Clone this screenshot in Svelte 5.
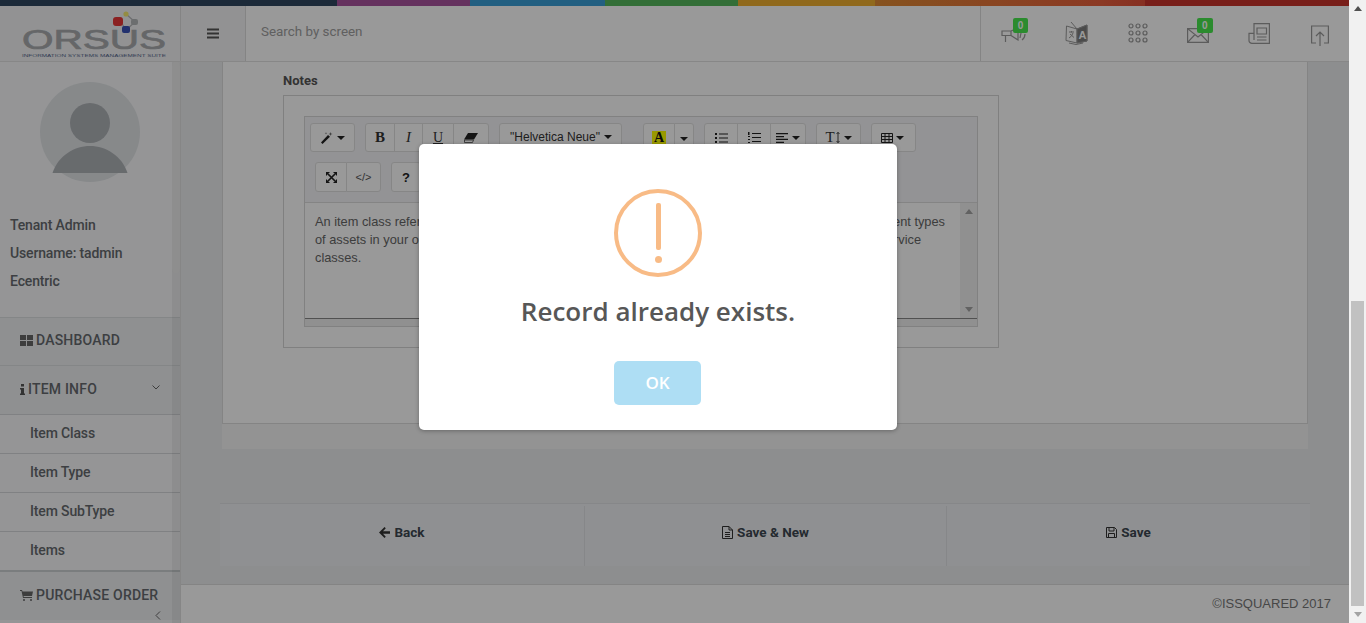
<script>
	const menuItems = ['Item Class', 'Item Type', 'Item SubType', 'Items'];
</script>

<div class="page">
	<div class="stripe"></div>

	<header class="topbar">
		<div class="logo">
			<svg width="180" height="55" viewBox="0 0 180 55">
				<path d="M126 8 L135 16 L126 24 L121 16" fill="none" stroke="#b5b7b9" stroke-width="1.2" />
				<rect x="113" y="11" width="10" height="9" rx="3" fill="#e83838" />
				<circle cx="126" cy="8" r="2.6" fill="#f5ea70" />
				<rect x="131" y="13" width="7" height="6" rx="2" fill="#b5b7b9" />
				<rect x="122" y="20" width="8" height="7" rx="2" fill="#3a52b8" />
				<text x="22" y="43" textLength="144" lengthAdjust="spacingAndGlyphs" class="logo-word">ORSUS</text>
				<text x="22" y="50.500" textLength="144" lengthAdjust="spacingAndGlyphs" class="logo-tag">INFORMATION SYSTEMS MANAGEMENT SUITE</text>
			</svg>
		</div>
		<div class="burger">
			<svg width="12" height="11" viewBox="0 0 12 11"><path d="M0 .5h12v2H0zM0 4.500h12v2H0zM0 8.500h12v2H0z" fill="#555" /></svg>
		</div>
		<div class="search">Search by screen</div>
		<div class="tools">
			<div class="tool">
				<svg class="low" width="27" height="14" viewBox="0 0 27 14" fill="none" stroke="#999" stroke-width="1.2">
					<path d="M1 3h9v4.500H1zM4.500 7.500V14M10 3l7-3v12l-7-4.500M20 5l-1 5M24 6q0 4-3 6" />
				</svg>
				<span class="badge">0</span>
			</div>
			<div class="tool">
				<svg class="nudge" width="23" height="25" viewBox="0 0 23 25" fill="none" stroke="#999" stroke-width="1">
					<path d="M1.500 5L12 8v14L1 19.500zM12 8l10-4v16l-10 2" />
					<path d="M12 8l10-4v16l-10 2zM6 1l6 7" fill="#7d7d7d" />
					<path d="M4 11h5M6.500 10v1.500M8 12q-1 3.500-4 5M5 13l4 3.500M4 22q7 3 14 0" />
					<text x="13.500" y="18" class="tr-a">A</text>
				</svg>
			</div>
			<div class="tool">
				<svg class="nudge" width="20" height="20" viewBox="0 0 20 20" fill="none" stroke="#999" stroke-width="1.2">
					<circle cx="3" cy="3" r="2" /><circle cx="10" cy="3" r="2" /><circle cx="17" cy="3" r="2" />
					<circle cx="3" cy="10" r="2" /><circle cx="10" cy="10" r="2" /><circle cx="17" cy="10" r="2" />
					<circle cx="3" cy="17" r="2" /><circle cx="10" cy="17" r="2" /><circle cx="17" cy="17" r="2" />
				</svg>
			</div>
			<div class="tool">
				<svg class="low" width="22" height="15" viewBox="0 0 22 15" fill="none" stroke="#999" stroke-width="1.2">
					<path d="M.6.6h20.800v13.800H.6zM.6.6L11 9 21.400.6M.6 14.400L8 6.500M21.400 14.400L14 6.500" />
				</svg>
				<span class="badge mail">0</span>
			</div>
			<div class="tool">
				<svg width="22" height="21" viewBox="0 0 22 21" fill="none" stroke="#999" stroke-width="1.2">
					<path d="M6 17V.6h15.400v19.800H4a3 3 0 0 1-3-3v-7h5" />
					<path d="M9 5h9.500v6H9zM9 14h9.500M9 17h9.500" />
				</svg>
			</div>
			<div class="tool">
				<svg class="low" width="18" height="21" viewBox="0 0 18 21" fill="none" stroke="#999" stroke-width="1.2">
					<path d="M5 18H.6V1h16.800v17H13M9 21V7M5 11l4-4 4 4" />
				</svg>
			</div>
		</div>
	</header>

	<div class="body">
		<aside class="sidebar">
			<div class="side-scroll"><div class="side-thumb"></div></div>
			<div class="profile">
				<svg class="avatar" width="100" height="100" viewBox="0 0 100 100">
					<circle cx="50" cy="50" r="50" fill="#e1e4e7" />
					<circle cx="50" cy="41" r="20" fill="#aeb2b6" />
					<path d="M12.500 91 C18 74 34 64 50 64 C66 64 82 74 87.500 91 z" fill="#aeb2b6" />
				</svg>
				<p>Tenant Admin</p>
				<p>Username: tadmin</p>
				<p>Ecentric</p>
			</div>
			<nav>
				<div class="nav-head dash">
					<svg width="13" height="11" viewBox="0 0 13 11" fill="#666"><path d="M0 0h6v5H0zM7 0h6v5H7zM0 6h6v5H0zM7 6h6v5H7z" /></svg>
					DASHBOARD
				</div>
				<div class="nav-head info">
					<svg width="5" height="11" viewBox="0 0 5 11" fill="#555"><path d="M1 0h3v2.500H1zM0 4h4v5.500h1V11H0V9.500h1V5.500H0z" /></svg>
					ITEM INFO
					<svg class="chev" width="8" height="5" viewBox="0 0 8 5" fill="none" stroke="#666" stroke-width="1"><path d="M.5.5L4 4 7.500.5" /></svg>
				</div>
				{#each menuItems as item}
					<div class="sub">{item}</div>
				{/each}
				<div class="nav-head purchase">
					<svg width="13" height="11" viewBox="0 0 13 11" fill="#666"><path d="M0 0h2l.5 1.500H13L12 6H3.500l.3 1H12v1H3L1.500 1H0z" /><circle cx="4" cy="10" r="1" /><circle cx="11" cy="10" r="1" /></svg>
					PURCHASE ORDER
				</div>
				<svg class="collapse" width="6" height="9" viewBox="0 0 6 9" fill="none" stroke="#666" stroke-width="1"><path d="M5 .5L1 4.500 5 8.500" /></svg>
			</nav>
		</aside>

		<main class="content">
			<section class="card">
				<div class="label">Notes</div>
				<div class="editor-box">
					<div class="editor">
						<div class="toolbar">
							<div class="tb-row">
								<div class="group">
									<span class="btn w45">
										<svg width="12" height="12" viewBox="0 0 12 12"><path d="M0 10.500L7 3l2 1.800L1.500 12z" fill="#222" /><path d="M9.500 0l.5 1.500 1.500.5-1.500.5-.5 1.500L9 2.500 7.500 2 9 1.500zM5 0l.3 1 1 .3-1 .3-.3 1-.3-1-1-.3 1-.3z" fill="#666" /></svg>
										<i class="caret"></i>
									</span>
								</div>
								<div class="group">
									<span class="btn glyph b w30">B</span>
									<span class="btn glyph it w28">I</span>
									<span class="btn glyph un w31">U</span>
									<span class="btn w35">
										<svg width="14" height="10" viewBox="0 0 14 10"><path d="M4 0h10l-4 6.500H0z" fill="#222" /><path d="M.5 7h9L8.500 9.500H.5z" fill="none" stroke="#444" stroke-width=".8" /></svg>
									</span>
								</div>
								<div class="group">
									<span class="btn font w123">"Helvetica Neue" <i class="caret"></i></span>
								</div>
								<div class="group gap-lg">
									<span class="btn w32"><span class="color-a">A</span></span>
									<span class="btn w19"><i class="caret solo"></i></span>
								</div>
								<div class="group">
									<span class="btn w33">
										<svg width="13" height="10" viewBox="0 0 13 10" fill="#222"><path d="M0 0h2v2H0zM0 4h2v2H0zM0 8h2v2H0zM4 .5h9v1H4zM4 4.500h9v1H4zM4 8.500h9v1H4z" /></svg>
									</span>
									<span class="btn w33">
										<svg width="13" height="11" viewBox="0 0 13 11" fill="#222"><path d="M0 0h1.500v3H0zM0 4h2v1H0zM0 7h2v1H0zM0 10h2v1H0zM4 1h9v1H4zM4 5h9v1H4zM4 9h9v1H4z" /></svg>
									</span>
									<span class="btn w35">
										<svg width="12" height="10" viewBox="0 0 12 10" fill="#222"><path d="M0 0h12v1.300H0zM0 2.900h8v1.300H0zM0 5.800h12v1.300H0zM0 8.700h8V10H0z" /></svg>
										<i class="caret"></i>
									</span>
								</div>
								<div class="group">
									<span class="btn w45">
										<span class="tt">T</span><svg width="4" height="11" viewBox="0 0 4 11" fill="none" stroke="#444"><path d="M2 0v11M.5 2L2 .5 3.500 2M.5 9L2 10.500 3.500 9" /></svg>
										<i class="caret"></i>
									</span>
								</div>
								<div class="group">
									<span class="btn w45 tight">
										<svg width="12" height="10" viewBox="0 0 12 10" fill="none" stroke="#222"><path d="M.5.5h11v9H.5zM.5 3.500h11M.5 6.500h11M4 .5v9M8 .5v9" /></svg>
										<i class="caret"></i>
									</span>
								</div>
							</div>
							<div class="tb-row second">
								<div class="group">
									<span class="btn w32">
										<svg width="11" height="11" viewBox="0 0 11 11"><path d="M0 0h4L0 4zM11 0v4L7 0zM0 11V7l4 4zM11 11H7l4-4z" fill="#222" /><path d="M2 2l7 7M9 2l-7 7" stroke="#222" stroke-width="1.700" /></svg>
									</span>
									<span class="btn code w34">&lt;/&gt;</span>
								</div>
								<div class="group">
									<span class="btn help w30">?</span>
								</div>
							</div>
						</div>
						<div class="edit-area">
							<div class="edit-text">
								<div class="line"><span>An item class refers to a group</span><span>to represent different types</span></div>
								<div class="line short"><span>of assets in your organization</span><span>as product or service</span></div>
								<div class="line"><span>classes.</span></div>
							</div>
							<div class="edit-scroll">
								<i class="arrow up"></i>
								<i class="arrow down"></i>
							</div>
						</div>
						<div class="statusbar"></div>
					</div>
				</div>
			</section>
			<div class="card-foot"></div>

			<div class="actions">
				<div class="action">
					<svg width="11" height="11" viewBox="0 0 11 11" fill="#333"><path d="M5.500 0l1.300 1.300L4 4.200h7v2.600H4l2.800 2.900L5.500 11 0 5.500z" /></svg>
					Back
				</div>
				<div class="action">
					<svg width="11" height="13" viewBox="0 0 11 13" fill="none" stroke="#333"><path d="M.5.500h6.500l3.500 3.500v8.500H.5zM7 .5V4h3.500M3 6.500h5M3 8.500h5M3 10.500h5" /></svg>
					Save &amp; New
				</div>
				<div class="action">
					<svg width="11" height="11" viewBox="0 0 11 11" fill="none" stroke="#333"><path d="M.5.500h8l2 2v8H.5zM3 .5v3.500h5V.5M2.500 10.500V6.500h6v4" /></svg>
					Save
				</div>
			</div>

			<footer class="foot">©ISSQUARED 2017</footer>
		</main>
	</div>

	<div class="overlay">
		<div class="modal">
			<div class="warn">
				<span class="warn-bar"></span>
				<span class="warn-dot"></span>
			</div>
			<h2>Record already exists.</h2>
			<button class="ok">OK</button>
		</div>
	</div>

	<div class="page-scroll">
		<i class="arrow up top"></i>
		<div class="page-thumb"></div>
		<i class="arrow down bottom"></i>
	</div>
</div>

<style>
	:global(body) {
		margin: 0;
		overflow: hidden;
	}

	.page {
		position: relative;
		width: 1366px;
		height: 623px;
		display: flex;
		flex-direction: column;
		overflow: hidden;
		padding-right: 17px;
		box-sizing: border-box;
		background: #ebedef;
		font-family: Roboto, "Liberation Sans", sans-serif;
		color: #333;
	}

	.stripe {
		height: 6px;
		flex: none;
		background: linear-gradient(to right,
			#2f4660 0, #2f4660 337px,
			#a8549f 337px, #a8549f 470px,
			#3a9fd8 470px, #3a9fd8 605px,
			#56b85c 605px, #56b85c 738px,
			#f0b030 738px, #f0b030 875px,
			#e08a34 875px, #e8603c 1100px, #e0503a 1145px,
			#c8352c 1145px, #c8352c 100%);
	}

	.topbar {
		height: 56px;
		flex: none;
		display: flex;
		background: #fff;
		border-bottom: 1px solid #e2e2e2;
		box-sizing: border-box;
	}

	.logo {
		width: 181px;
		flex: none;
		height: 55px;
		border-right: 1px solid #dcdcdc;
		box-sizing: border-box;
		background: #f3f4f5;
	}

	.logo-word {
		font: 400 27px "Liberation Sans", sans-serif;
		fill: #a9abae;
		stroke: #a9abae;
		stroke-width: 0.7;
	}

	.logo-tag {
		font: 400 3.500px "Liberation Sans", sans-serif;
		fill: #5a6a90;
	}

	.burger {
		width: 64px;
		flex: none;
		display: flex;
		align-items: center;
		justify-content: center;
		border-right: 1px solid #dcdcdc;
		background: #f3f4f5;
	}

	.search {
		flex: 1;
		padding: 0 15px;
		line-height: 52px;
		font-size: 13.400px;
		color: #a0a0a0;
	}

	.tools {
		width: 369px;
		flex: none;
		display: flex;
		gap: 31.300px;
		border-left: 1px solid #dcdcdc;
		box-sizing: border-box;
		padding: 12px 0 0 18px;
	}

	.tool {
		position: relative;
		display: flex;
		width: 30px;
		height: 30px;
		justify-content: center;
		align-items: center;
	}

	.tool .low {
		margin-top: 4px;
	}

	.tool .nudge {
		margin-left: 3px;
	}

	.badge {
		position: absolute;
		left: 14px;
		top: 0;
		width: 15px;
		height: 15px;
		border-radius: 2px;
		background: #48e84e;
		color: #fff;
		font: 700 10px/15px "Liberation Sans", sans-serif;
		text-align: center;
	}

	.badge.mail {
		left: 14px;
		width: 16px;
	}

	.tr-a {
		font: 700 11px "Liberation Sans", sans-serif;
		fill: #fff;
		stroke: none;
	}

	.body {
		flex: 1;
		display: flex;
		min-height: 0;
	}

	.sidebar {
		position: relative;
		width: 181px;
		flex: none;
		background: #f8f9fa;
		border-right: 1px solid #e0e0e0;
		box-sizing: border-box;
		overflow: hidden;
		font-weight: 500;
		font-size: 14px;
		color: #666a6e;
	}

	.side-scroll {
		position: absolute;
		z-index: 1;
		right: 0;
		top: 0;
		bottom: 0;
		width: 8px;
		background: rgba(0, 0, 0, 0.05);
	}

	.side-thumb {
		height: 211px;
		border-radius: 4px;
		background: #8e8e8e;
	}

	.profile {
		height: 255px;
		box-sizing: border-box;
		padding: 20px 0 0 10px;
	}

	.avatar {
		display: block;
		margin: 0 0 34px 30px;
	}

	.profile p {
		margin: 0 0 10px;
		line-height: 18px;
		white-space: nowrap;
		letter-spacing: -0.15px;
	}

	.nav-head {
		display: flex;
		align-items: center;
		gap: 3px;
		padding-left: 20px;
		box-sizing: border-box;
		white-space: nowrap;
		letter-spacing: 0.2px;
		background: #eef0f2;
		border-top: 1px solid #dcdfe2;
	}

	.dash {
		height: 48px;
		padding-bottom: 3px;
	}

	.info {
		height: 49px;
		padding-bottom: 2px;
		position: relative;
	}

	.chev {
		position: absolute;
		left: 152px;
		top: 19px;
	}

	.sub {
		height: 39px;
		line-height: 37px;
		padding-left: 30px;
		box-sizing: border-box;
		letter-spacing: -0.15px;
		border-top: 1px solid #d5d8db;
	}

	.purchase {
		height: 50px;
		padding-bottom: 2px;
		border-top: 2px solid #ccd0d3;
	}

	nav {
		position: relative;
	}

	.collapse {
		position: absolute;
		left: 155px;
		bottom: 0;
	}

	.content {
		flex: 1;
		min-width: 0;
		display: flex;
		flex-direction: column;
	}

	.card {
		height: 362px;
		flex: none;
		box-sizing: border-box;
		margin: 0 41px;
		padding: 11px 0 0 60px;
		background: #fff;
		border: 1px solid #dcdcdc;
		border-top: none;
		color: #555;
	}

	.label {
		font-size: 13px;
		font-weight: 700;
		line-height: 15px;
		margin-bottom: 7px;
	}

	.editor-box {
		width: 716px;
		height: 253px;
		box-sizing: border-box;
		padding: 20px;
		border: 1px solid #d6d6d6;
	}

	.editor {
		width: 674px;
		border: 1px solid #d8d8d8;
		border-bottom: none;
		box-sizing: border-box;
	}

	.toolbar {
		height: 86px;
		box-sizing: border-box;
		padding: 6px 5px 0;
		background: #f5f6f8;
		border-bottom: 1px solid #ddd;
	}

	.tb-row {
		display: flex;
		gap: 10px;
	}

	.tb-row.second {
		margin: 10px 0 0 5px;
	}

	.group {
		display: flex;
	}

	.gap-lg {
		margin-left: 11px;
	}

	.btn {
		height: 29px;
		box-sizing: border-box;
		display: flex;
		align-items: center;
		justify-content: center;
		gap: 4px;
		background: #fff;
		border: 1px solid #e0e0e0;
		margin-left: -1px;
		color: #333;
		white-space: nowrap;
	}

	.btn.tight {
		gap: 3px;
		padding-right: 2px;
	}

	.tb-row.second .btn {
		height: 30px;
	}

	.group .btn:first-child {
		margin-left: 0;
		border-radius: 3px 0 0 3px;
	}

	.group .btn:last-child {
		border-radius: 0 3px 3px 0;
	}

	.group .btn:only-child {
		border-radius: 3px;
	}

	.w19 { width: 20px; }
	.w28 { width: 29px; }
	.w30 { width: 30px; }
	.w31 { width: 32px; }
	.w32 { width: 32px; }
	.w33 { width: 34px; }
	.w34 { width: 35px; }
	.w35 { width: 36px; }
	.w45 { width: 45px; }
	.w123 { width: 123px; }

	.caret {
		display: inline-block;
		width: 0;
		height: 0;
		border-left: 4px solid transparent;
		border-right: 4px solid transparent;
		border-top: 4px solid #222;
	}

	.glyph {
		font-family: "Liberation Serif", serif;
		font-size: 15px;
	}

	.b { font-weight: 700; }
	.it { font-style: italic; }

	.un {
		text-decoration: underline;
		font-size: 14px;
	}

	.font {
		font: 12px "Liberation Sans", sans-serif;
		color: #333;
		padding: 0 0 2px 1px;
	}

	.color-a {
		display: block;
		padding: 0 2px;
		background: #ff0;
		color: #111;
		font: 700 14px/13px "Liberation Serif", serif;
	}

	.solo {
		margin-top: 2px;
	}

	.tt {
		font: 15px "Liberation Serif", serif;
		margin-right: -3px;
	}

	.code {
		font: 11px "Liberation Sans", sans-serif;
		color: #555;
	}

	.help {
		font: 700 13px "Liberation Sans", sans-serif;
		color: #222;
	}

	.edit-area {
		height: 115px;
		display: flex;
		background: #fff;
		border-bottom: 1px solid #888;
	}

	.edit-text {
		flex: 1;
		padding: 10px 0 0 10px;
		font: 12.800px/18px "Liberation Sans", sans-serif;
		color: #666;
		white-space: nowrap;
	}

	.line {
		width: 630px;
		display: flex;
		justify-content: space-between;
	}

	.line.short {
		width: 606px;
	}

	.edit-scroll {
		width: 17px;
		background: #f1f1f1;
		position: relative;
	}

	.arrow {
		position: absolute;
		left: 5px;
		width: 0;
		height: 0;
		border-left: 4px solid transparent;
		border-right: 4px solid transparent;
	}

	.arrow.up {
		top: 6px;
		border-bottom: 5px solid #a3a3a3;
	}

	.arrow.down {
		bottom: 6px;
		border-top: 5px solid #a3a3a3;
	}

	.statusbar {
		height: 8px;
		background: #f0f0f0;
		border-bottom: 1px solid #d8d8d8;
		box-sizing: border-box;
	}

	.card-foot {
		height: 25px;
		flex: none;
		margin: 0 41px;
		background: #f6f6f6;
	}

	.actions {
		height: 63px;
		flex: none;
		margin: 54px 39px 0;
		display: grid;
		grid-template-columns: 364px 362px 1fr;
		background: #eff1f3;
		border-top: 1px solid #e0e2e4;
		box-sizing: border-box;
	}

	.action {
		display: flex;
		align-items: center;
		justify-content: center;
		gap: 4px;
		font-size: 13.500px;
		font-weight: 700;
		color: #3c4650;
		border-left: 1px solid #e0e2e4;
		margin-top: 2px;
		padding-bottom: 8px;
	}

	.action:first-child {
		border-left: none;
	}

	.foot {
		flex: 1;
		margin-top: 18px;
		padding: 11px 18px 0 0;
		text-align: right;
		background: #fff;
		border-top: 1px solid #dcdcdc;
		font: 13px "Liberation Sans", sans-serif;
		color: #777;
	}

	.overlay {
		position: absolute;
		left: 0;
		top: 0;
		bottom: 0;
		width: 1349px;
		background: rgba(0, 0, 0, 0.4);
		display: flex;
		justify-content: center;
		align-items: flex-start;
		padding: 144px 33px 0 0;
		box-sizing: border-box;
	}

	.modal {
		width: 478px;
		height: 286px;
		box-sizing: border-box;
		padding-top: 45px;
		background: #fff;
		border-radius: 5px;
		box-shadow: 0 1px 4px rgba(0, 0, 0, 0.3);
		display: flex;
		flex-direction: column;
		align-items: center;
	}

	.warn {
		position: relative;
		width: 88px;
		height: 88px;
		box-sizing: border-box;
		border: 4px solid #f8bb86;
		border-radius: 50%;
		flex: none;
	}

	.warn-bar {
		position: absolute;
		left: 38px;
		top: 10px;
		width: 5px;
		height: 47px;
		border-radius: 2px;
		background: #f8bb86;
	}

	.warn-dot {
		position: absolute;
		left: 37px;
		top: 63px;
		width: 7px;
		height: 7px;
		border-radius: 50%;
		background: #f8bb86;
	}

	h2 {
		margin: 16px 0 0;
		font: 600 26px/36px "Open Sans", sans-serif;
		color: #575757;
	}

	.ok {
		margin: 32px 1px 0 0;
		width: 87px;
		height: 44px;
		border: none;
		border-radius: 5px;
		background: #aedef4;
		color: #fff;
		font: 600 17px "Open Sans", sans-serif;
		padding: 0 0 2px;
	}

	.page-scroll {
		position: absolute;
		right: 0;
		top: 0;
		bottom: 0;
		width: 17px;
		background: #f1f1f1;
	}

	.page-thumb {
		position: absolute;
		left: 2px;
		right: 2px;
		top: 301px;
		height: 305px;
		background: #c1c1c1;
	}

	.arrow.top {
		border-bottom-color: #505050;
		top: 6px;
	}

	.arrow.bottom {
		border-top-color: #a3a3a3;
		bottom: 6px;
	}
</style>
